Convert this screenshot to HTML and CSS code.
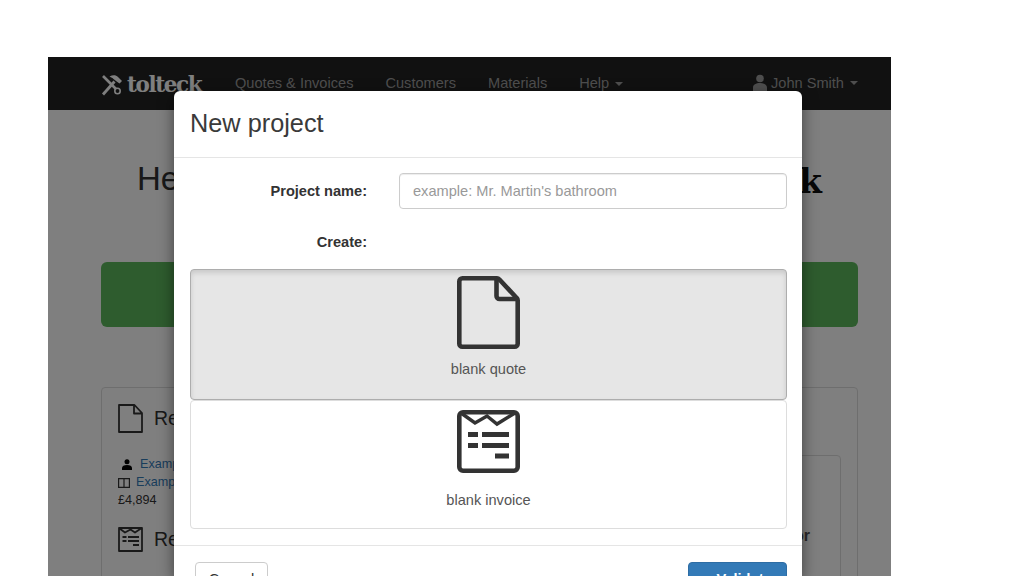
FILE: index.html
```html
<!DOCTYPE html>
<html lang="en">
<head>
<meta charset="utf-8">
<title>tolteck</title>
<link rel="stylesheet" href="styles.css">
</head>
<body>
<div class="app">
  <nav class="navbar">
    <a class="brand">
      <svg class="brand-icon" viewBox="0 0 22 22"><path d="M2 2 15 15" fill="none" stroke="currentColor" stroke-width="2.600"/><circle cx="16.500" cy="17" r="2.700" fill="none" stroke="currentColor" stroke-width="1.600"/><path d="M2 20.500 13.500 7.500" fill="none" stroke="currentColor" stroke-width="2.800"/><path d="M8.500 2.500C12 .5 15 1 17 3l4 4-2.500 2.500L15 7l-2.500-2C11.500 4 10.500 3.500 8.500 2.500Z" fill="currentColor"/></svg>
      <span>tolteck</span>
    </a>
    <a class="nav-link">Quotes &amp; Invoices</a>
    <a class="nav-link">Customers</a>
    <a class="nav-link">Materials</a>
    <a class="nav-link">Help <i class="caret"></i></a>
    <a class="nav-link nav-user">
      <svg class="user-icon" viewBox="0 0 14 17"><circle cx="7" cy="4.500" r="3.800"/><path d="M0 17v-3.500C0 10.500 3 9 7 9s7 1.500 7 4.500V17Z"/></svg>
      John Smith <i class="caret"></i>
    </a>
  </nav>
  <main class="content">
    <h1 class="hello"><span>Hello John Smith, welcome to</span><b>tolteck</b></h1>
    <div class="cta"></div>
    <section class="panel">
      <div class="panel-col">
        <h2 class="recent">
          <svg class="bg-icon" viewBox="0 0 25 29"><path d="M1 1h15.500L24 9v19H1ZM16 1v8.500h8" fill="none" stroke="currentColor" stroke-width="1.800" stroke-linejoin="round"/></svg>
          Recent quotes
        </h2>
        <div class="entry"><svg class="person" viewBox="0 0 10 11"><circle cx="5" cy="2.800" r="2.500"/><path d="M0 11V9c0-2 2-3 5-3s5 1 5 3v2Z"/></svg><a>Example customer</a></div>
        <div class="entry entry-tight"><svg class="book" viewBox="0 0 12 10"><path d="M.6.6h10.800v8.800H.6ZM6 .6v8.800" fill="none" stroke="currentColor" stroke-width="1.200"/></svg><a>Example project</a></div>
        <div class="price">£4,894</div>
        <h2 class="recent recent-2">
          <svg class="bg-icon bg-icon-2" viewBox="0 0 25 25"><path d="M1 1h23v23H1ZM1.500 1.500l5.500 4 5.500-3 4.500 3 6-4" fill="none" stroke="currentColor" stroke-width="1.800" stroke-linejoin="round"/><path d="M4.500 9h4v2h-4Zm5.500 0h11v2H10Zm-5.500 4h4v2h-4Zm5.500 0h11v2H10Zm5 4h6v2h-6Z"/></svg>
          Recent invoices
        </h2>
      </div>
      <div class="inner-box">Invoice editor</div>
    </section>
  </main>
</div>
<div class="backdrop"></div>
<div class="modal">
  <header class="modal-head"><h3>New project</h3></header>
  <div class="modal-body">
    <div class="field">
      <label class="field-label">Project name:</label>
      <input class="field-input" type="text" placeholder="example: Mr. Martin's bathroom">
    </div>
    <div class="field field-create">
      <label class="field-label">Create:</label>
    </div>
    <div class="options">
      <button class="option option-active" type="button">
        <svg class="option-icon" viewBox="0 0 63 73"><path d="M2.300 5.500a3.200 3.200 0 0 1 3.200-3.200H40a3 3 0 0 1 2.200 1L59.700 22a3 3 0 0 1 1 2.200v43.500a3 3 0 0 1-3 3H5.300a3 3 0 0 1-3-3Z" fill="none" stroke="currentColor" stroke-width="4.600" stroke-linejoin="round"/><path d="M39.500 2.500V20a3 3 0 0 0 3 3h18" fill="none" stroke="currentColor" stroke-width="4.600" stroke-linejoin="round"/></svg>
        <span>blank quote</span>
      </button>
      <button class="option option-second" type="button">
        <svg class="option-icon option-icon-2" viewBox="0 0 63 63"><path d="M2.300 6a3.700 3.700 0 0 1 3.700-3.700h51a3.700 3.700 0 0 1 3.700 3.700v51a3.700 3.700 0 0 1-3.700 3.700H6a3.700 3.700 0 0 1-3.700-3.700Z" fill="none" stroke="currentColor" stroke-width="4.600"/><path d="M4 3l14 10L30 6l10 8L58 3" fill="none" stroke="currentColor" stroke-width="3.500"/><path d="M11 22h10v5H11Zm14 0h27v5H25ZM11 33h10v5H11Zm14 0h27v5H25Zm13 10.500h14v5H38Z"/></svg>
        <span>blank invoice</span>
      </button>
    </div>
  </div>
  <footer class="modal-foot">
    <button class="btn btn-cancel" type="button">Cancel</button>
    <button class="btn btn-validate" type="button"><span class="check">✓</span> Validate</button>
  </footer>
</div>
</body>
</html>
```
FILE: styles.css
```css
* { box-sizing: border-box; }
html, body { margin: 0; height: 576px; overflow: hidden; background: #fff; }
body { font-family: "Liberation Sans", Arial, sans-serif; color: #333; position: relative; }

.app { margin: 57px 0 0 48px; width: 843px; height: 519px; overflow: hidden; background: #fff; }

.navbar { height: 53px; background: #222; color: #9d9d9d; display: flex; align-items: center; padding: 0 33px 0 53px; font-size: 14.6px; }
.brand { display: flex; align-items: center; gap: 4px; color: #fff; font: bold 21.5px "DejaVu Serif", serif; letter-spacing: -1.400px; width: 134px; padding-top: 2px; }
.brand-icon { width: 22px; height: 22px; }
.nav-link { margin-right: 32px; white-space: nowrap; padding-bottom: 2px; }
.nav-user { margin: 0 0 0 auto; display: flex; align-items: center; gap: 4px; }
.user-icon { width: 14px; height: 17px; fill: currentColor; }
.caret { display: inline-block; width: 0; height: 0; margin-left: 2px; vertical-align: middle; border-top: 4px solid; border-left: 4px solid transparent; border-right: 4px solid transparent; }

.content { padding: 49px 33px 0 53px; }
.hello { display: flex; justify-content: space-between; align-items: flex-start; width: 685px; height: 40px; margin: 0 0 63px 36px; font-size: 33px; font-weight: 400; line-height: 40px; white-space: nowrap; }
.hello b { font-family: "DejaVu Serif", serif; font-size: 33px; color: #111; margin-top: 3px; }
.cta { height: 65px; background: #5cb85c; border-radius: 6px; margin-bottom: 60px; }

.panel { height: 260px; padding: 15px 16px; border: 1px solid #ddd; border-radius: 4px; display: flex; justify-content: space-between; background: #fff; }
.panel-col { width: 300px; }
.recent { margin: 0; display: flex; align-items: center; gap: 11px; font-size: 19.5px; font-weight: 400; height: 30px; color: #333; }
.bg-icon { width: 25px; height: 29px; }
.bg-icon-2 { height: 25px; fill: currentColor; }
.entry { font-size: 12.6px; line-height: 17px; display: flex; align-items: center; gap: 8px; margin-top: 23px; padding-left: 4px; }
.entry-tight { margin-top: 1px; gap: 6px; padding-left: 0; }
.entry a { color: #337ab7; }
.person { width: 10px; height: 11px; fill: #000; }
.book { width: 12px; height: 10px; color: #333; }
.price { font-size: 12.6px; line-height: 18px; }
.recent-2 { margin-top: 15px; }
.inner-box { width: 400px; height: 200px; margin-top: 52px; padding: 70px 30px 0 0; text-align: right; border: 1px solid #ddd; border-radius: 4px; font-size: 16px; font-weight: bold; line-height: 20px; color: #555; }

.backdrop { position: absolute; left: 48px; top: 57px; width: 843px; height: 519px; background: rgba(0, 0, 0, .5); }

.modal { position: absolute; left: 174px; top: 91px; width: 628px; height: 485px; overflow: hidden; background: #fff; border-radius: 6px 6px 0 0; box-shadow: 0 5px 15px rgba(0, 0, 0, .5); }
.modal-head { height: 67px; padding: 15px 16px; border-bottom: 1px solid #e5e5e5; }
.modal-head h3 { margin: 0; font-size: 25.3px; font-weight: 400; line-height: 34px; color: #3a3a3a; }
.modal-body { padding: 15px 15px 16px 16px; }
.field { display: flex; align-items: center; gap: 32px; height: 36px; }
.field-label { width: 177px; text-align: right; font-size: 14.6px; font-weight: bold; }
.field-input { width: 388px; height: 36px; padding: 6px 13px; border: 1px solid #ccc; border-radius: 4px; font: 14.6px "Liberation Sans", Arial, sans-serif; color: #555; box-shadow: inset 0 1px 1px rgba(0, 0, 0, .075); }
.field-input::placeholder { color: #999; opacity: 1; }
.field-create { margin-top: 15px; height: 36px; margin-bottom: 9px; }
.options { display: flex; flex-direction: column; }
.option { display: flex; flex-direction: column; align-items: center; width: 597px; height: 131px; padding: 6px 0 0; border: 1px solid #ccc; border-radius: 4px; background: #fff; color: #333; font: 14.6px "Liberation Sans", Arial, sans-serif; }
.option span { margin-top: 10px; line-height: 20px; color: #555; }
.option-active { background: #e6e6e6; border-color: #adadad; box-shadow: inset 0 3px 5px rgba(0, 0, 0, .125); }
.option-second { height: 129px; border-color: #ddd; padding-top: 9px; }
.option-icon { width: 63px; height: 73px; flex: none; }
.option-icon-2 { height: 63px; fill: currentColor; }
.option-second span { margin-top: 17px; }
.modal-foot { padding: 16px 15px 0 21px; border-top: 1px solid #e5e5e5; display: flex; justify-content: space-between; }
.btn { height: 34px; flex: none; border-radius: 4px; font: 14.6px "Liberation Sans", Arial, sans-serif; border: 1px solid #ccc; background: #fff; color: #333; }
.btn-cancel { width: 73px; }
.btn-validate { width: 99px; background: #337ab7; border-color: #2e6da4; color: #fff; font-weight: bold; }
.check { font-size: 11px; }
```
